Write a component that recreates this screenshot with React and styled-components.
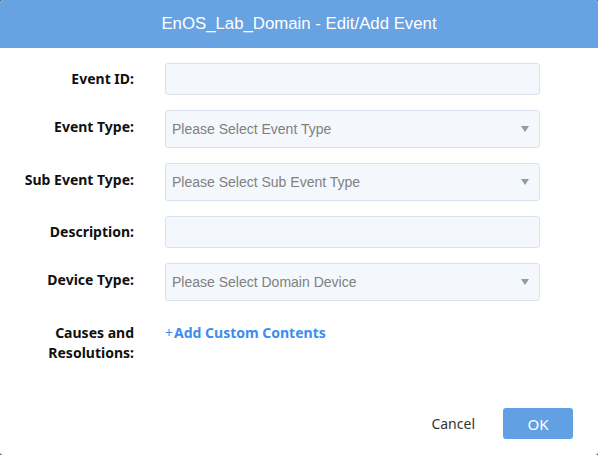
import React from 'react';
import styled, { createGlobalStyle } from 'styled-components';

const GlobalStyle = createGlobalStyle`
  html, body {
    margin: 0;
    padding: 0;
    background: #4a4a4a;
  }
  * { box-sizing: border-box; }
`;

const Dialog = styled.div`
  width: 598px;
  height: 455px;
  background: #fff;
  border-radius: 3px;
  overflow: hidden;
  display: flex;
  flex-direction: column;
  font-family: "Noto Sans", "Open Sans", sans-serif;
`;

const Header = styled.div`
  height: 48px;
  background: #67a2e3;
  color: #fff;
  font-family: "Liberation Sans", Arial, sans-serif;
  font-size: 16.8px;
  display: flex;
  align-items: center;
  justify-content: center;
`;

const Form = styled.div`
  flex: 1;
  padding: 15px 0 0 0;
  display: flex;
  flex-direction: column;
  gap: 15px;
`;

const Row = styled.div`
  display: grid;
  grid-template-columns: 134px 375px;
  column-gap: 31px;
  align-items: ${p => (p.top ? 'start' : 'center')};
  padding-top: ${p => p.pad || 0}px;
`;

const Label = styled.div`
  text-align: right;
  font-size: 14px;
  font-weight: 700;
  color: #111;
  line-height: 20px;
  margin-top: ${p => (p.raise ? '-5px' : '0')};
`;

const Field = styled.div`
  height: ${p => (p.select ? 38 : 32)}px;
  background: #f4f8fd;
  border: 1px solid #dae2ee;
  border-radius: 3px;
  display: flex;
  align-items: center;
  justify-content: space-between;
  padding: 0 10px 0 6px;
  font-family: "Liberation Sans", Arial, sans-serif;
  font-size: 14px;
  color: #808080;
`;

const Arrow = styled.span`
  width: 0;
  height: 0;
  border-left: 4px solid transparent;
  border-right: 4px solid transparent;
  border-top: 6px solid #8f9f9d;
`;

const AddLink = styled.div`
  font-size: 14px;
  font-weight: 700;
  color: #3b8ef0;
  line-height: 20px;
  span {
    font-weight: 400;
    margin-right: 1px;
  }
`;

const Footer = styled.div`
  height: 47px;
  display: flex;
  align-items: flex-start;
  justify-content: flex-end;
  gap: 28px;
  padding-right: 25px;
`;

const CancelButton = styled.button`
  border: none;
  background: transparent;
  font-family: inherit;
  font-size: 14px;
  color: #333;
  height: 31px;
  padding: 0;
`;

const OkButton = styled.button`
  width: 70px;
  height: 31px;
  border: none;
  border-radius: 3px;
  background: #62a0e4;
  color: #fff;
  font-family: inherit;
  font-size: 15px;
`;

const fields = [
  { label: 'Event ID:' },
  { label: 'Event Type:', placeholder: 'Please Select Event Type', select: true },
  { label: 'Sub Event Type:', placeholder: 'Please Select Sub Event Type', select: true },
  { label: 'Description:' },
  { label: 'Device Type:', placeholder: 'Please Select Domain Device', select: true },
];

const App = () => (
  <>
    <GlobalStyle />
    <Dialog>
      <Header>EnOS_Lab_Domain - Edit/Add Event</Header>
      <Form>
        {fields.map(f => (
          <Row key={f.label}>
            <Label raise={f.select}>{f.label}</Label>
            <Field select={f.select}>
              <span>{f.placeholder || ''}</span>
              {f.select && <Arrow />}
            </Field>
          </Row>
        ))}
        <Row top pad={7}>
          <Label>Causes and<br />Resolutions:</Label>
          <AddLink><span>+</span>Add Custom Contents</AddLink>
        </Row>
      </Form>
      <Footer>
        <CancelButton>Cancel</CancelButton>
        <OkButton>OK</OkButton>
      </Footer>
    </Dialog>
  </>
);

export default App;
